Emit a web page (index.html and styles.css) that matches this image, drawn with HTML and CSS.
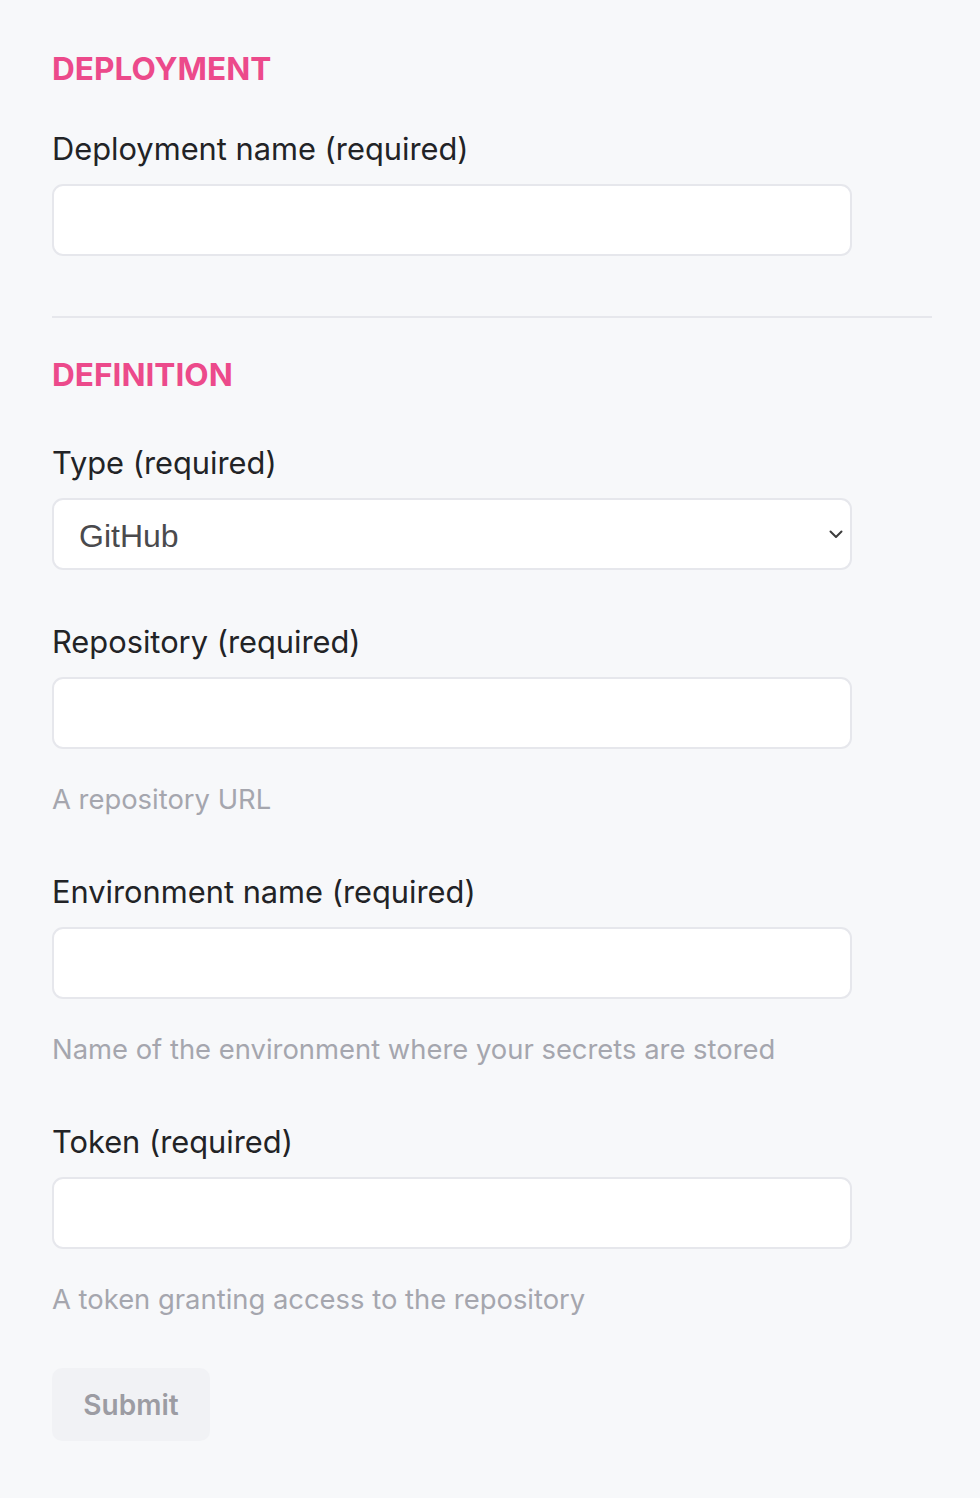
FILE: index.html
```html
<!DOCTYPE html>
<html lang="en">
<head>
<meta charset="utf-8">
<title>Deployment</title>
<link rel="stylesheet" href="styles.css">
</head>
<body>
<form class="page">
  <section class="section section--first">
    <h2 class="section-title">DEPLOYMENT</h2>
    <div class="field">
      <label class="field-label" for="dep-name">Deployment name (required)</label>
      <input class="field-input" id="dep-name" type="text">
    </div>
  </section>
  <hr class="divider">
  <section class="section section--second">
    <h2 class="section-title">DEFINITION</h2>
    <div class="field field--select">
      <label class="field-label" for="type">Type (required)</label>
      <div class="select-wrap">
        <select class="field-select" id="type">
          <option>GitHub</option>
        </select>
        <svg class="chevron" width="14" height="9" viewBox="0 0 14 9" aria-hidden="true"><path d="M1.5 1.5 L7 7 L12.5 1.5" fill="none" stroke="#3c3c3c" stroke-width="2" stroke-linecap="round" stroke-linejoin="round"/></svg>
      </div>
    </div>
    <div class="field">
      <label class="field-label" for="repo">Repository (required)</label>
      <input class="field-input" id="repo" type="text">
      <p class="field-help">A repository URL</p>
    </div>
    <div class="field">
      <label class="field-label" for="env">Environment name (required)</label>
      <input class="field-input" id="env" type="text">
      <p class="field-help">Name of the environment where your secrets are stored</p>
    </div>
    <div class="field">
      <label class="field-label" for="token">Token (required)</label>
      <input class="field-input" id="token" type="text">
      <p class="field-help">A token granting access to the repository</p>
    </div>
  </section>
  <button class="submit" type="button" disabled>Submit</button>
</form>
</body>
</html>
```
FILE: styles.css
```css
* { box-sizing: border-box; }
html, body {
  margin: 0;
  background: #f7f8fa;
}
body {
  font-family: Inter, "Noto Sans", sans-serif;
  color: #222326;
}
.page {
  display: flex;
  flex-direction: column;
  align-items: flex-start;
  padding: 49px 48px 56px 52px;
}
.section {
  display: flex;
  flex-direction: column;
  width: 100%;
}
.section-title {
  margin: 0 0 42px;
  font-size: 31.6px;
  line-height: 40px;
  font-weight: 700;
  color: #ec4a8b;
  letter-spacing: 0;
}
.section--second .section-title { margin-bottom: 50px; }
.field {
  display: flex;
  flex-direction: column;
  width: 800px;
  margin-bottom: 57px;
}
.section--first .field { margin-bottom: 60px; }
.field--select { margin-bottom: 54px; }
.field-label {
  font-size: 30.8px;
  line-height: 36px;
  font-weight: 400;
  color: #222326;
  margin-bottom: 17px;
}
.field-input,
.field-select {
  display: block;
  width: 100%;
  height: 72px;
  border: 2px solid #e6e7ec;
  border-radius: 11px;
  background: #ffffff;
  margin: 0;
  outline: none;
}
.select-wrap {
  position: relative;
  width: 100%;
}
.field-select {
  -webkit-appearance: none;
  appearance: none;
  font-family: "Liberation Sans", Arial, sans-serif;
  font-size: 32px;
  color: #4a4a4d;
  padding: 3px 0 0 25px;
}
.chevron {
  position: absolute;
  right: 9px;
  top: 32px;
  pointer-events: none;
}
.field-help {
  margin: 32px 0 0;
  font-size: 27.4px;
  line-height: 36px;
  color: #a5a6ae;
}
.divider {
  width: 880px;
  height: 2px;
  border: 0;
  margin: 0 0 37px;
  background: #e6e7ec;
}
.submit {
  margin-top: -6px;
  width: 158px;
  height: 73px;
  border: 0;
  border-radius: 10px;
  background: #f1f2f5;
  font-family: Inter, "Noto Sans", sans-serif;
  font-size: 28px;
  font-weight: 600;
  color: #9c9ca3;
}
```
